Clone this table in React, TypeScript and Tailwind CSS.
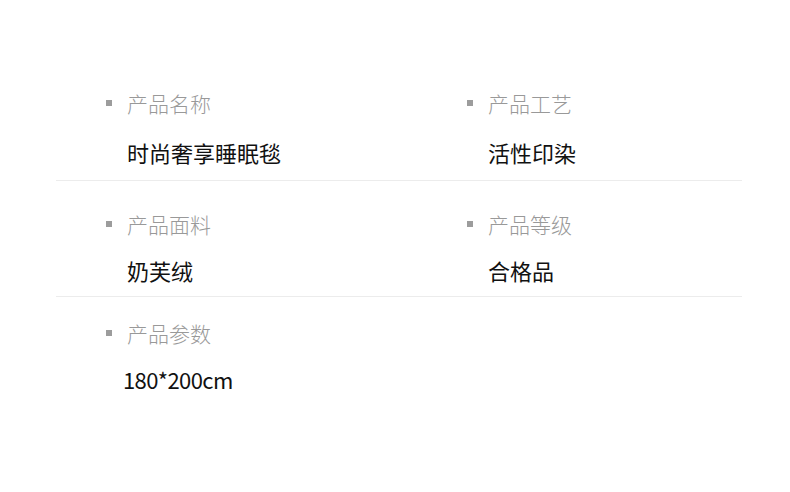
import React from 'react';

type Item = { label: string; value: string; extra?: string };

const rows: { items: Item[]; cls: string; gap: string; border: boolean }[] = [
  {
    items: [
      { label: '产品名称', value: '时尚奢享睡眠毯' },
      { label: '产品工艺', value: '活性印染' },
    ],
    cls: 'pt-[88px] pb-[13px]',
    gap: 'mt-[19px]',
    border: true,
  },
  {
    items: [
      { label: '产品面料', value: '奶芙绒' },
      { label: '产品等级', value: '合格品' },
    ],
    cls: 'pt-[28px] pb-[11px]',
    gap: 'mt-[16px]',
    border: true,
  },
  {
    items: [{ label: '产品参数', value: '180*200cm', extra: '-ml-[4px] tracking-[-0.6px]' }],
    cls: 'pt-[21px] pb-[12px]',
    gap: 'mt-[16px]',
    border: false,
  },
];

const Cell: React.FC<{ item: Item; gap: string }> = ({ item, gap }) => (
  <div className="pl-[50px]">
    <div className="flex items-center h-[30px]">
      <span className="w-[6px] h-[6px] bg-[#9c9c9c] mr-[15px] shrink-0"></span>
      <span className="text-[21px] leading-[30px] font-light text-[#999]">{item.label}</span>
    </div>
    <div className={`${gap} pl-[21px] text-[22px] leading-[30px] text-[#111]`}>
      <span className={`inline-block ${item.extra ?? ''}`}>{item.value}</span>
    </div>
  </div>
);

export default function App() {
  return (
    <div
      className="w-[790px] h-[492px] bg-white overflow-hidden"
      style={{ fontFamily: '"Noto Sans CJK SC", "Noto Sans", sans-serif' }}
    >
      <div className="ml-[56px] w-[686px]">
        {rows.map((row, i) => (
          <div
            key={i}
            className={`grid grid-cols-[361px_1fr] ${row.cls} ${row.border ? 'border-b border-[#ececec]' : ''}`}
          >
            {row.items.map(item => (
              <Cell key={item.label} item={item} gap={row.gap} />
            ))}
          </div>
        ))}
      </div>
    </div>
  );
}
